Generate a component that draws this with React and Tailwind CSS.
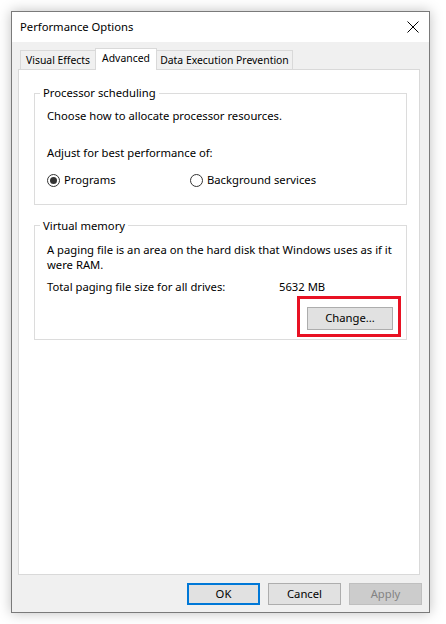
import React from 'react';

const font = { fontFamily: '"Noto Sans", "Open Sans", sans-serif' };

function Radio({ checked, label, className = '' }) {
  return (
    <label className={`flex items-center gap-[4px] ${className}`}>
      <span className="w-[13px] h-[13px] rounded-full border border-[#333333] bg-white flex items-center justify-center">
        {checked && <span className="w-[7px] h-[7px] rounded-full bg-[#333333]" />}
      </span>
      <span>{label}</span>
    </label>
  );
}

function Group({ title, className = '', children }) {
  return (
    <fieldset className={`border border-[#dcdcdc] pl-[12px] ${className}`}>
      <legend className="-ml-[7px] px-[3px] leading-[14px]">{title}</legend>
      {children}
    </fieldset>
  );
}

function Btn({ children, primary, disabled }) {
  let cls = 'border border-[#adadad] bg-[#e1e1e1] text-black';
  if (primary) cls = 'border-2 border-[#0078d7] bg-[#e1e1e1] text-black';
  if (disabled) cls = 'border border-[#bfbfbf] bg-[#cccccc] text-[#838383]';
  return (
    <div className={`w-[73px] h-[22px] flex items-center justify-center ${cls}`}>{children}</div>
  );
}

export default function App() {
  return (
    <div className="w-[446px] h-[624px] bg-white pt-[11px] pl-[11px] text-[11.25px] text-black" style={font}>
      <div className="w-[419px] h-[602px] border border-[#7a7a7a] bg-[#f0f0f0] flex flex-col shadow-[0_0_12px_rgba(0,0,0,0.25)]">
        {/* title bar */}
        <div className="h-[30px] bg-white flex items-center justify-between pl-[8px] pr-[10px]">
          <span>Performance Options</span>
          <svg width="12" height="12" viewBox="0 0 12 12">
            <path d="M0.5 0.5 L11.5 11.5 M11.5 0.5 L0.5 11.5" stroke="#000" strokeWidth="1" />
          </svg>
        </div>

        <div className="flex-1 flex flex-col pl-[6px] pr-[9px] pt-[6px]">
          {/* tabs */}
          <div className="flex items-end pl-[2px] h-[21px] relative z-10 text-[10.4px]">
            <div className="w-[75px] h-[19px] border border-[#d9d9d9] border-b-0 border-r-0 bg-[#f0f0f0] flex items-center justify-center pt-[1px]">Visual Effects</div>
            <div className="w-[62px] h-[22px] border border-[#d9d9d9] border-b-0 bg-white flex items-start justify-center pt-[2px] -mb-[1px]">Advanced</div>
            <div className="w-[136px] h-[19px] border border-[#d9d9d9] border-b-0 border-l-0 bg-[#f0f0f0] flex items-center justify-center pt-[1px]">Data Execution Prevention</div>
          </div>

          {/* panel */}
          <div className="h-[506px] border border-[#d9d9d9] bg-white pl-[15px] pr-[12px] pt-[16px]">
            <Group title="Processor scheduling" className="pb-[15px]">
              <div className="mt-[8px]">Choose how to allocate processor resources.</div>
              <div className="mt-[20px]">Adjust for best performance of:</div>
              <div className="flex mt-[10px]">
                <Radio checked label="Programs" className="w-[143px]" />
                <Radio label="Background services" />
              </div>
            </Group>

            <Group title="Virtual memory" className="mt-[14px] pb-[2px]">
              <div className="mt-[9px] leading-[15px] pr-[10px]">A paging file is an area on the hard disk that Windows uses as if it were RAM.</div>
              <div className="flex mt-[7px]">
                <span className="w-[232px]">Total paging file size for all drives:</span>
                <span>5632 MB</span>
              </div>
              <div className="flex justify-end mr-[5px]">
                <div className="border-[3px] border-[#e81123] pt-[8px] pl-[7px] pr-[5px] pb-[4px]">
                  <div className="w-[86px] h-[23px] border border-[#adadad] bg-[#e1e1e1] flex items-center justify-center">Change...</div>
                </div>
              </div>
            </Group>
          </div>

          {/* bottom buttons */}
          <div className="flex justify-end gap-[8px] mt-[8px] -mr-[2px]">
            <Btn primary>OK</Btn>
            <Btn>Cancel</Btn>
            <Btn disabled>Apply</Btn>
          </div>
        </div>
      </div>
    </div>
  );
}
